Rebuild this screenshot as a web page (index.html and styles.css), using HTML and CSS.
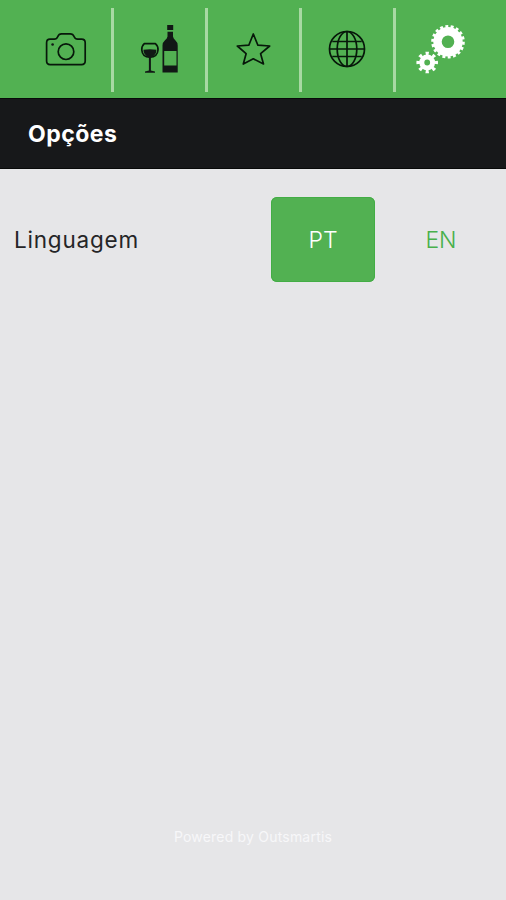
FILE: index.html
```html
<!DOCTYPE html>
<html lang="pt">
<head>
<meta charset="utf-8">
<title>Opções</title>
<link rel="stylesheet" href="styles.css">
</head>
<body>
<div class="app">
  <nav class="tabs">
    <a class="tab"><svg class="icon line" viewBox="19 0 94 98">
      <path d="M50 39.2H54.2Q56.8 39.2 57.7 36.8Q58.8 33.9 61.5 33.9H70.2Q73 33.9 74.2 36.8Q75.1 39.2 77.7 39.2H81.5Q85.2 39.2 85.2 42.8V61Q85.2 64.6 81.5 64.6H50.2Q46.6 64.6 46.6 61V42.8Q46.6 39.2 50 39.2Z"/>
      <circle cx="66" cy="51.7" r="7.8"/><circle class="solid" cx="52.6" cy="44.5" r="1.3"/>
    </svg></a>
    <a class="tab"><svg class="icon line" viewBox="113 0 94 98">
      <path d="M144.3 43.7H155.4Q158.3 46.2 158 50Q157.4 57.2 149.9 57.2Q142.3 57.2 141.8 50Q141.5 46.2 144.3 43.7Z"/>
      <path class="solid" d="M143.4 49.8Q149.8 48.6 156.4 49.8Q156.5 53.5 154.2 55.5Q152.3 57 150.9 57.4V70.5L155 71.4V72.8H145V71.4L148.9 70.5V57.4Q143.4 55.3 143.4 49.8Z"/>
      <path class="solid" d="M167.2 25H173.2V30H167.2ZM167.5 31.8H173V36.6Q173.4 38.6 175.3 40.3Q177.7 42.4 177.7 45.5V72.6H162.5V45.5Q162.5 42.4 165 40.3Q167.2 38.6 167.5 36.6Z"/>
      <path class="label" d="M164.2 51H176.5V65.5H164.2Z"/>
    </svg></a>
    <a class="tab"><svg class="icon line" viewBox="206.5 0 94 98">
      <path d="M252.8 34L257.4 45.2L269.2 46L260.1 53.7L263 64L252.8 58.8L242.8 64L245.6 53.7L236.8 46L248.3 45.2Z"/>
    </svg></a>
    <a class="tab"><svg class="icon line" viewBox="300 0 94 98">
      <circle cx="347" cy="49" r="17.5"/><ellipse cx="347" cy="49" rx="9.8" ry="17.5"/>
      <path d="M347 31.5V66.5M329.5 49H364.5M332.3 41.5H361.7M332.3 56.5H361.7"/>
    </svg></a>
    <a class="tab"><svg class="icon gears" viewBox="394 0 94 98">
      <circle cx="448" cy="41.8" r="10.5" stroke-width="8.4"/>
      <circle cx="448" cy="41.8" r="15.1" stroke-width="3.4" pathLength="36" stroke-dasharray="1.1 .9"/>
      <circle cx="427.2" cy="62.5" r="5.4" stroke-width="5"/>
      <circle cx="427.2" cy="62.5" r="8.9" stroke-width="3.8" pathLength="16" stroke-dasharray=".9 1.1" stroke-dashoffset=".45"/>
    </svg></a>
  </nav>
  <header class="title"><h1>Opções</h1></header>
  <main class="options">
    <span class="name">Linguagem</span>
    <div class="choices">
      <button class="choice selected">PT</button>
      <button class="choice">EN</button>
    </div>
  </main>
  <footer class="credit">Powered by Outsmartis</footer>
</div>
</body>
</html>
```
FILE: styles.css
```css
* { box-sizing: border-box; }
body { margin: 0; background: #e6e6e8; font-family: Inter, "Liberation Sans", sans-serif; }
.app { height: 900px; display: flex; flex-direction: column; }
.tabs { height: 98px; flex: none; display: flex; padding: 0 18px 0 19px; background: #52b152; }
.tab { flex: 1; min-width: 0; display: flex; align-items: center; justify-content: center; }
.tab + .tab::before { content: ""; width: 3px; height: 84px; margin: 2px -1.5px 0; flex: none; background: #a8d9a3; }
.icon { width: 94px; height: 98px; flex: none; display: block; }
.line { fill: none; stroke: #07180a; stroke-width: 1.7; stroke-linejoin: round; }
.line .solid { fill: #111815; stroke: none; }
.line .label { fill: #52b152; stroke: none; }
.gears { fill: none; stroke: #fff; }
.title { height: 71px; flex: none; display: flex; align-items: center; padding: 0 28px; background: #17181a; border-top: 1px solid #080b09; border-bottom: 1px solid #080909; }
h1 { margin: 0; color: #fff; font: 700 23px/30px Inter, sans-serif; letter-spacing: .5px; }
.options { display: flex; justify-content: space-between; align-items: center; padding: 28px 13px 0 14px; }
.name { color: #252527; font-size: 22.5px; letter-spacing: .8px; }
.choices { display: flex; gap: 14px; }
.choice { width: 104px; height: 85px; padding: 0; border: 0; border-radius: 6px; background: none; color: #48b04b; font: 300 23px/28px Inter, sans-serif; }
.selected { background: #52b152; color: #fff; box-shadow: inset 0 0 0 1px #43ad45; }
.credit { margin-top: auto; padding-bottom: 53px; text-align: center; color: #f7f7f9; font-size: 14px; line-height: 20px; letter-spacing: .2px; }
```
